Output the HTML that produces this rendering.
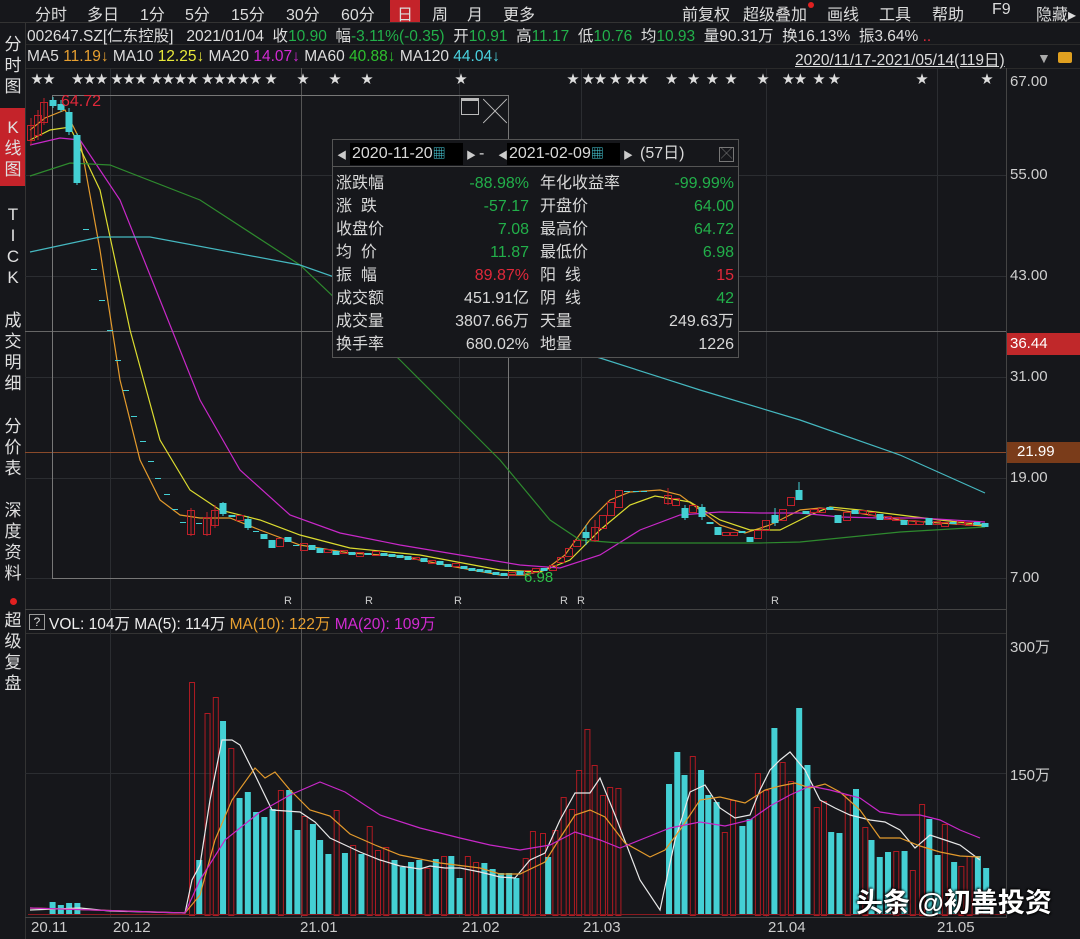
<!DOCTYPE html>
<html><head><meta charset="utf-8"><style>
*{margin:0;padding:0;box-sizing:border-box}
body{width:1080px;height:939px;background:#16171b;overflow:hidden;position:relative;font-family:"Liberation Sans","Noto Sans CJK SC",sans-serif;color:#d8d8d8}
.a{position:absolute;white-space:nowrap}
.m{font-size:16px;top:1px;color:#dcdcdc}
.side{position:absolute;left:3px;width:20px;font-size:17px;line-height:21px;text-align:center;color:#e0e0e0}
.g{color:#22b04a}.r{color:#e0283a}.o{color:#e8a030}.y{color:#e8e83a}.p{color:#d22ad2}.c{color:#4ad2e0}.gg{color:#2ec02e}
.ax{font-size:15px;color:#cfcfcf;left:1010px}
#box{position:absolute;left:332px;top:139px;width:407px;height:219px;background:#16171b;border:1px solid #555;font-size:16px}
#box .row{position:absolute;left:0;width:100%;height:23px;line-height:23px}
#box .row span{top:0;line-height:23px}
#box .l{position:absolute;left:3px}
#box .v1{position:absolute;right:209px;text-align:right}
#box .l2{position:absolute;left:207px}
#box .v2{position:absolute;right:4px;text-align:right}
</style></head><body>
<svg id="sv" width="1080" height="939" style="position:absolute;left:0;top:0"></svg>

<div class="a" style="left:390px;top:0;width:30px;height:22px;background:#c4232a"></div>
<span class="a m" style="left:35px">分时</span><span class="a m" style="left:87px">多日</span><span class="a m" style="left:140px">1分</span><span class="a m" style="left:185px">5分</span><span class="a m" style="left:231px">15分</span><span class="a m" style="left:286px">30分</span><span class="a m" style="left:341px">60分</span><span class="a m" style="left:397px">日</span><span class="a m" style="left:432px">周</span><span class="a m" style="left:467px">月</span><span class="a m" style="left:503px">更多</span>
<span class="a m" style="left:682px">前复权</span><span class="a m" style="left:743px">超级叠加</span><span class="a" style="left:808px;top:2px;width:6px;height:6px;border-radius:3px;background:#e02020"></span><span class="a m" style="left:827px">画线</span><span class="a m" style="left:879px">工具</span><span class="a m" style="left:932px">帮助</span><span class="a m" style="left:992px">F9</span><span class="a m" style="left:1036px">隐藏▸</span>

<div class="a" style="left:27px;top:24px;font-size:15.5px;color:#ddd">002647.SZ[仁东控股]&nbsp;&nbsp;&nbsp;2021/01/04&nbsp;&nbsp;收<span class="g">10.90</span>&nbsp;&nbsp;幅<span class="g">-3.11%(-0.35)</span>&nbsp;&nbsp;开<span class="g">10.91</span>&nbsp;&nbsp;高<span class="g">11.17</span>&nbsp;&nbsp;低<span class="g">10.76</span>&nbsp;&nbsp;均<span class="g">10.93</span>&nbsp;&nbsp;量90.31万&nbsp;&nbsp;换16.13%&nbsp;&nbsp;振3.64% <span class="r">..</span></div>
<div class="a" style="left:27px;top:48px;font-size:15.5px;color:#ddd">MA5 <span class="o">11.19↓</span> MA10 <span class="y">12.25↓</span> MA20 <span class="p">14.07↓</span> MA60 <span class="gg">40.88↓</span> MA120 <span class="c">44.04↓</span></div>
<div class="a" style="left:795px;top:48px;font-size:15.5px;color:#ddd;text-decoration:underline">2020/11/17-2021/05/14(119日)</div>
<span class="a" style="left:1037px;top:50px;font-size:14px;color:#aaa">▼</span>
<span class="a" style="left:1058px;top:52px;width:14px;height:11px;background:#e0a020;border-radius:2px"></span>

<div class="a" style="left:31px;top:70px;font-size:12px;color:#ddd;letter-spacing:0">★★&nbsp;&nbsp;&nbsp;&nbsp;&nbsp;★★★&nbsp;★★★&nbsp;★★★★&nbsp;★★★★★&nbsp;★&nbsp;&nbsp;&nbsp;&nbsp;&nbsp;&nbsp;★&nbsp;&nbsp;&nbsp;&nbsp;&nbsp;&nbsp;★&nbsp;&nbsp;&nbsp;&nbsp;&nbsp;&nbsp;★</div>
<div class="a" style="left:455px;top:70px;font-size:12px;color:#ddd">★</div>
<div class="a" style="left:567px;top:70px;font-size:12px;color:#ddd">★&nbsp;★★&nbsp;★&nbsp;★★&nbsp;&nbsp;&nbsp;&nbsp;&nbsp;★&nbsp;&nbsp;&nbsp;★&nbsp;&nbsp;★&nbsp;&nbsp;★&nbsp;&nbsp;&nbsp;&nbsp;&nbsp;&nbsp;★&nbsp;&nbsp;&nbsp;&nbsp;★★&nbsp;&nbsp;★&nbsp;★</div>
<div class="a" style="left:916px;top:70px;font-size:12px;color:#ddd">★</div>
<div class="a" style="left:981px;top:70px;font-size:12px;color:#ddd">★</div>

<div class="a" style="left:0;top:108px;width:25px;height:78px;background:#c4232a"></div>
<div class="side" style="top:34px">分<br>时<br>图</div>
<div class="side" style="top:117px">K<br>线<br>图</div>
<div class="side" style="top:204px">T<br>I<br>C<br>K</div>
<div class="side" style="top:310px">成<br>交<br>明<br>细</div>
<div class="side" style="top:416px">分<br>价<br>表</div>
<div class="side" style="top:500px">深<br>度<br>资<br>料</div>
<div class="a" style="left:10px;top:598px;width:7px;height:7px;border-radius:4px;background:#e02020"></div>
<div class="side" style="top:610px">超<br>级<br>复<br>盘</div>

<span class="a ax" style="top:73px">67.00</span><span class="a ax" style="top:166px">55.00</span><span class="a ax" style="top:267px">43.00</span><span class="a ax" style="top:368px">31.00</span><span class="a ax" style="top:469px">19.00</span><span class="a ax" style="top:569px">7.00</span>
<div class="a" style="left:1007px;top:333px;width:73px;height:22px;background:#c0282a;color:#fff;font-size:15px;padding:2px 0 0 3px">36.44</div>
<div class="a" style="left:1007px;top:442px;width:73px;height:21px;background:#7a3c1a;color:#fff;font-size:15px;padding:1px 0 0 10px">21.99</div>
<span class="a" style="left:61px;top:93px;font-size:16px;color:#e0283a">64.72</span>
<span class="a" style="left:524px;top:569px;font-size:15px;color:#2ec04a">6.98</span>
<span class="a" style="left:284px;top:595px;font-size:11px;color:#ccc">R</span><span class="a" style="left:365px;top:595px;font-size:11px;color:#ccc">R</span><span class="a" style="left:454px;top:595px;font-size:11px;color:#ccc">R</span><span class="a" style="left:560px;top:595px;font-size:11px;color:#ccc">R</span><span class="a" style="left:577px;top:595px;font-size:11px;color:#ccc">R</span><span class="a" style="left:771px;top:595px;font-size:11px;color:#ccc">R</span>

<div class="a" style="left:29px;top:614px;width:16px;height:16px;border:1px solid #999;font-size:12px;text-align:center;line-height:14px;color:#ddd">?</div>
<div class="a" style="left:49px;top:612px;font-size:15.5px;color:#eee">VOL: 104万 MA(5): 114万 <span class="o">MA(10): 122万</span> <span class="p">MA(20): 109万</span></div>
<span class="a ax" style="top:636px">300万</span><span class="a ax" style="top:764px">150万</span>

<span class="a" style="left:31px;top:919px;font-size:15px;color:#ccc">20.11</span><span class="a" style="left:113px;top:919px;font-size:15px;color:#ccc">20.12</span><span class="a" style="left:300px;top:919px;font-size:15px;color:#ccc">21.01</span><span class="a" style="left:462px;top:919px;font-size:15px;color:#ccc">21.02</span><span class="a" style="left:583px;top:919px;font-size:15px;color:#ccc">21.03</span><span class="a" style="left:768px;top:919px;font-size:15px;color:#ccc">21.04</span><span class="a" style="left:937px;top:919px;font-size:15px;color:#ccc">21.05</span>

<div class="a" style="left:856px;top:881px;font-size:27px;font-weight:bold;color:#fff;text-shadow:1px 1px 2px #000,-1px -1px 2px #000">头条 @初善投资</div>

<div class="a" style="left:461px;top:98px;width:18px;height:17px;border:1.5px solid #bbb;border-top-width:3px"></div>
<span class="a" style="left:483px;top:92px;font-size:24px;color:#bbb;font-weight:100">╳</span>

<div id="box">
 <div class="a" style="left:0;top:0;width:405px;height:27px;border-bottom:1px solid #555"></div>
 <span class="a" style="left:4px;top:7px;font-size:10px;color:#ccc">◀</span>
 <div class="a" style="left:17px;top:3px;width:113px;height:22px;background:#000;font-size:16px;line-height:21px;padding-left:2px">2020-11-20<span class="c" style="font-size:13px">▦</span></div>
 <span class="a" style="left:133px;top:7px;font-size:10px;color:#ccc">▶</span>
 <span class="a" style="left:146px;top:3px;line-height:21px">-</span>
 <span class="a" style="left:165px;top:7px;font-size:10px;color:#ccc">◀</span>
 <div class="a" style="left:174px;top:3px;width:113px;height:22px;background:#000;font-size:16px;line-height:21px;padding-left:2px">2021-02-09<span class="c" style="font-size:13px">▦</span></div>
 <span class="a" style="left:290px;top:7px;font-size:10px;color:#ccc">▶</span>
 <span class="a" style="left:307px;top:3px;line-height:21px">(57日)</span>
 <div class="a" style="left:386px;top:7px;width:15px;height:15px;border:1px solid #777;font-size:11px;line-height:13px;text-align:center;color:#888">╳</div>
 <div class="row" style="top:32px"><span class="l">涨跌幅</span><span class="v1 g">-88.98%</span><span class="l2">年化收益率</span><span class="v2 g">-99.99%</span></div>
 <div class="row" style="top:55px"><span class="l">涨&nbsp;&nbsp;跌</span><span class="v1 g">-57.17</span><span class="l2">开盘价</span><span class="v2 g">64.00</span></div>
 <div class="row" style="top:78px"><span class="l">收盘价</span><span class="v1 g">7.08</span><span class="l2">最高价</span><span class="v2 g">64.72</span></div>
 <div class="row" style="top:101px"><span class="l">均&nbsp;&nbsp;价</span><span class="v1 g">11.87</span><span class="l2">最低价</span><span class="v2 g">6.98</span></div>
 <div class="row" style="top:124px"><span class="l">振&nbsp;&nbsp;幅</span><span class="v1 r">89.87%</span><span class="l2">阳&nbsp;&nbsp;线</span><span class="v2 r">15</span></div>
 <div class="row" style="top:147px"><span class="l">成交额</span><span class="v1">451.91亿</span><span class="l2">阴&nbsp;&nbsp;线</span><span class="v2 g">42</span></div>
 <div class="row" style="top:170px"><span class="l">成交量</span><span class="v1">3807.66万</span><span class="l2">天量</span><span class="v2">249.63万</span></div>
 <div class="row" style="top:193px"><span class="l">换手率</span><span class="v1">680.02%</span><span class="l2">地量</span><span class="v2">1226</span></div>
</div>

<script>
var s='';
function L(x1,y1,x2,y2,c,w){s+='<line x1="'+x1+'" y1="'+y1+'" x2="'+x2+'" y2="'+y2+'" stroke="'+c+'" stroke-width="'+(w||1)+'"/>';}
function P(pts,c,w){s+='<polyline fill="none" stroke="'+c+'" stroke-width="'+(w||1.2)+'" points="'+pts+'"/>';}
L(0,22.5,1080,22.5,'#333');L(25,44.5,1080,44.5,'#2a2a2a');L(25,68.5,1080,68.5,'#2a2a2a');
L(25.5,22,25.5,939,'#333');L(1006.5,68,1006.5,918,'#444');
L(25,609.5,1006,609.5,'#444');L(25,633.5,1006,633.5,'#333');L(25,917.5,1006,917.5,'#444');
[175,276,377,478,578].forEach(function(y){L(25,y+.5,1006,y+.5,'#2b2d31');});
[773].forEach(function(y){L(25,y+.5,1006,y+.5,'#2b2d31');});
[110,459,581,766,937].forEach(function(x){L(x+.5,68,x+.5,917,'#2b2d31');});
L(301.5,68,301.5,917,'#555');
L(25,331.5,1006,331.5,'#666');L(25,452.5,1006,452.5,'#8a4a2a');
s+='<rect x="52.5" y="95.5" width="456" height="483" fill="none" stroke="#777"/>';
P('30,130 45,118 65,110 80,140 100,250 120,380 140,460 160,500 180,515 200,518 230,518 260,530 300,545 350,553 400,556 450,566 500,575 525,575 545,570 565,555 590,520 610,500 630,492 660,490 680,495 700,510 720,525 745,533 770,525 800,510 820,508 840,510 870,515 900,520 940,523 985,526','#e39a2c');
P('30,140 50,130 70,127 100,190 130,330 160,440 190,490 220,510 260,520 300,535 350,548 420,555 500,570 540,572 570,560 600,530 630,505 655,496 690,502 720,520 750,530 780,530 810,515 830,507 860,510 900,515 940,520 985,525','#dcdc30');
P('30,145 60,138 80,140 120,200 160,300 200,400 240,470 290,515 340,533 400,545 460,555 520,565 560,568 600,555 640,530 680,515 720,512 760,513 800,513 840,517 880,518 920,518 985,522','#c828c8');
P('30,176 70,163 110,165 200,200 300,265 400,360 450,410 500,460 550,520 580,540 620,543 760,543 800,542 900,532 985,527','#2e8a2e');
P('30,252 100,237 150,237 300,265 400,300 500,330 600,358 700,390 800,420 900,455 985,493','#45b8c0');
var C=[[31,125,140,1,118,145],[38,115,135,1,110,140],[44,102,122,1,98,125],[53,100,106,0,97,108],[61,104,110,0,100,112],[69,112,132,0,108,135],[77,135,183,0,133,185],
[86,229,230,0],[94,269,270,0],[102,300,301,0],[110,330,331,0],[118,360,361,0],[126,390,391,0],[134,416,417,0],[143,441,442,0],[151,461,462,0],[158,478,479,0],[167,494,495,0],[175,509,510,0],[183,522,523,0],
[191,510,534,1,508,536],[199,523,524,0],[207,517,534,1,512,536],[215,510,525,1,505,528],[223,503,514,0,502,516],[232,515,517,0],[240,515,520,1],[248,519,528,0,516,530],[256,531,532,0],[264,534,539,0],[272,540,548,0],[280,538,546,1],[288,537,542,0],[296,545,546,0],[304,543,550,1],[312,545,550,0],[320,548,553,0],[328,549,552,1],[336,551,555,0],[344,550,553,1],[352,552,555,0],[360,552,556,1],[368,553,555,0],[376,551,555,1],[384,553,556,0],[392,554,557,0],[400,555,558,0],[408,556,560,0],[416,557,559,1],[424,558,562,0],[432,560,563,1],[440,561,565,0],[448,564,567,0],[456,563,566,1],[464,566,569,0],[472,568,571,0],[480,569,572,0],[488,570,573,0],[496,572,575,0],[504,573,576,0],[512,572,575,1],[520,571,575,0],[528,570,573,1],[536,568,572,1],[544,568,571,0],[553,565,570,1],[561,557,562,1],[569,548,556,1],[577,540,546,1],[586,532,538,0,525,545],[595,527,540,1,520,542],[603,515,528,1],[611,502,515,1],[619,490,507,1],[627,491,492,0],[636,491,492,0],[644,491,492,0],[668,495,503,1,488,505],[676,498,505,1],[685,508,518,0,505,520],[693,505,512,1],[702,507,517,0,504,520],[710,522,524,0],[718,527,535,0],[726,532,535,1],[734,532,535,1],[742,531,533,0],[750,537,542,0],[758,530,538,1],[766,520,530,1],[775,515,523,0,508,526],[783,509,520,1],[791,497,505,1],[799,490,500,0,482,500],[806,511,514,0],[814,509,512,1],[822,508,512,1],[830,507,510,0],[838,515,523,0],[847,512,520,1],[855,510,514,0],[863,510,513,1],[872,512,515,1],[880,514,520,0],[888,516,519,1],[896,517,520,1],[904,520,525,0],[912,520,524,1],[920,521,524,1],[929,518,525,0],[937,521,524,1],[945,522,526,1],[953,522,524,0],[961,521,524,1],[969,522,525,1],[977,522,525,0],[985,523,527,0]];
C.forEach(function(c){var col=c[3]?'#c0202a':'#44d0d4';var x=c[0];
 if(c[4]!==undefined){L(x,c[4],x,c[5],col);}
 var h=Math.max(1,c[2]-c[1]);
 if(h<=1){L(x-3,c[1]+.5,x+3,c[1]+.5,col);}
 else if(c[3]) s+='<rect x="'+(x-3.5)+'" y="'+(c[1]+.5)+'" width="7" height="'+h+'" fill="none" stroke="'+col+'"/>';
 else s+='<rect x="'+(x-3.5)+'" y="'+c[1]+'" width="7" height="'+h+'" fill="'+col+'"/>';});
var VL=[[48,902,0],[56,905,0],[64,903,0],[72,903,0],[183,682,1],[190,860,0],[198,713,1],[206,697,1],[213,721,0],[221,748,1],[229,798,0],[237,792,0],[245,812,0],[253,817,0],[261,809,0],[269,790,1],[277,790,0],[285,830,0],[292,816,1],[300,824,0],[307,840,0],[315,854,0],[323,810,1],[331,853,0],[339,845,1],[347,854,0],[355,826,1],[363,850,1],[371,847,1],[379,860,0],[387,867,0],[395,862,0],[403,860,0],[411,868,1],[419,859,0],[427,856,1],[434,856,0],[442,878,0],[450,856,1],[458,862,1],[466,863,0],[474,869,0],[482,873,0],[490,873,0],[497,878,0],[506,858,1],[513,831,1]];
var VR=[[540,833,1],[545,857,0],[552,830,1],[560,797,1],[568,809,1],[575,770,1],[583,729,1],[590,765,1],[598,795,1],[605,787,1],[613,788,1],[662,784,0],[670,752,0],[677,775,0],[685,756,1],[693,770,0],[700,795,0],[708,802,0],[716,832,1],[724,800,1],[733,826,0],[740,819,0],[748,773,1],[756,790,1],[764,728,0],[772,762,1],[780,781,1],[788,708,0],[796,765,0],[805,807,1],[812,801,1],[819,832,0],[827,833,0],[835,795,1],[843,789,0],[852,827,1],[858,840,0],[866,857,0],[874,852,0],[882,851,1],[890,851,0],[898,870,1],[907,804,1],[914,819,0],[922,855,0],[929,824,1],[938,862,0],[945,866,1],[953,856,1],[961,856,0],[969,868,0]];
function vb(x,t,r){var col=r?'#b01a22':'#44d0d4';if(r)s+='<rect x="'+(x+.5)+'" y="'+(t+.5)+'" width="5" height="'+(915-t)+'" fill="none" stroke="'+col+'"/>';else s+='<rect x="'+x+'" y="'+t+'" width="6" height="'+(915-t)+'" fill="'+col+'"/>';}
VL.forEach(function(v){vb(v[0]*1.033,v[1],v[2]);});
VR.forEach(function(v){vb(540+(v[0]-540)*1.033,v[1],v[2]);});
L(28,914.5,1006,914.5,'#8a1a20');
P('30,910 80,908 110,911 185,913 192,880 200,865 210,800 222,740 232,740 240,745 255,775 272,810 300,812 315,822 330,838 345,845 360,852 380,860 400,866 420,869 430,866 445,868 460,868 480,872 500,877 515,878 530,860 545,853 560,820 575,793 590,793 600,778 615,815 640,880 660,910 675,840 690,792 705,785 720,808 735,818 750,815 760,790 770,770 780,760 790,752 805,770 820,800 835,808 850,815 870,820 885,822 900,830 915,848 930,835 945,840 960,845 980,860','#e8e8e8');
P('30,908 185,913 200,895 215,840 232,800 255,768 265,778 275,772 290,790 310,810 330,816 350,834 375,845 400,855 440,863 480,868 500,874 520,874 545,862 560,838 575,815 590,810 605,817 625,843 650,857 665,850 680,830 700,800 720,797 745,803 765,790 780,786 795,783 810,788 825,784 840,792 860,810 880,838 900,838 920,846 940,852 960,856 980,857','#e39a2c');
P('30,908 185,913 200,880 225,840 260,812 290,795 320,782 345,792 380,815 420,828 460,838 490,845 520,850 550,845 575,832 600,840 620,848 645,838 670,828 700,822 725,826 750,820 770,806 790,795 810,786 830,790 860,798 880,812 900,815 920,815 940,820 960,830 980,838','#c828c8');
document.getElementById('sv').innerHTML=s;
</script>
</body></html>
